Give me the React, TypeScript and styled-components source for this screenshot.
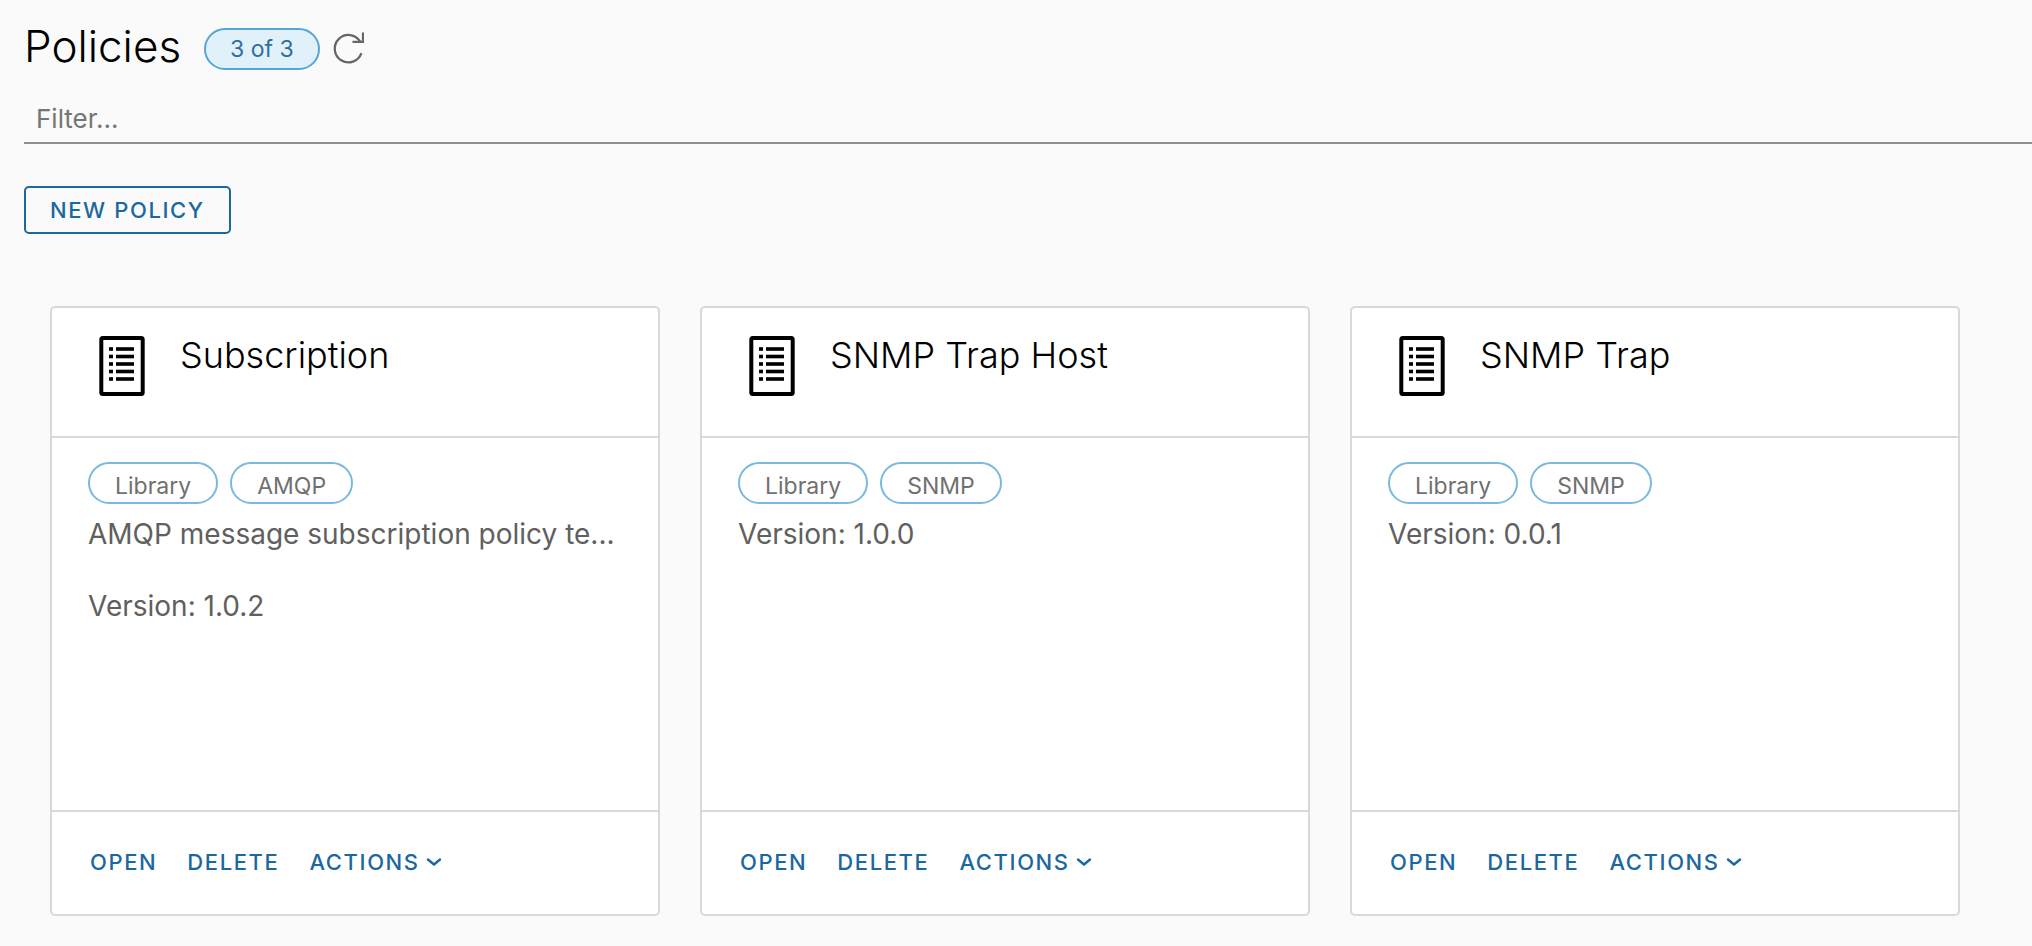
import React, { useState } from "react";
import styled, { createGlobalStyle } from "styled-components";

const GlobalStyle = createGlobalStyle`
  *, *::before, *::after { box-sizing: border-box; }
  body {
    margin: 0;
    background: #fafafa;
    color: #606060;
    font-family: Inter, "Open Sans", sans-serif;
  }
`;

const blue = "#1b689f";
const line = "#d9d9d9";

const Page = styled.main`
  padding: 22px 0 30px 24px;
`;

const TitleRow = styled.header`
  display: flex;
  align-items: flex-end;
`;

const PageTitle = styled.h1`
  margin: 0 23px 0 0;
  font-size: 44px;
  font-weight: 300;
  line-height: 48px;
  color: #000;
`;

const CountBadge = styled.span`
  height: 42px;
  padding: 0 24px;
  border: 2px solid #55a5d6;
  border-radius: 21px;
  background: #e1f1fa;
  color: #2f6f9f;
  font-size: 23px;
  line-height: 38px;
`;

const RefreshButton = styled.button`
  display: flex;
  margin: 0 0 0 12px;
  padding: 0;
  border: 0;
  background: none;
  color: #666;
  cursor: pointer;
`;

const FilterInput = styled.input`
  display: block;
  width: 100%;
  height: 50px;
  margin: 24px 0 0;
  padding: 0 12px;
  border: 0;
  border-bottom: 2px solid #8f8f8f;
  border-radius: 0;
  background: none;
  color: #000;
  font: inherit;
  font-size: 26px;
  outline: none;
  &::placeholder { color: #757575; opacity: 1; }
`;

const NewPolicyButton = styled.button`
  height: 48px;
  margin: 42px 0 0;
  padding: 0 24px;
  border: 2px solid ${blue};
  border-radius: 5px;
  background: transparent;
  color: ${blue};
  font: inherit;
  font-size: 22px;
  font-weight: 500;
  letter-spacing: 0.073em;
  text-transform: uppercase;
  cursor: pointer;
`;

const CardGrid = styled.section`
  display: grid;
  grid-template-columns: repeat(3, minmax(0, 1fr));
  gap: 40px;
  margin-top: 72px;
  padding: 0 72px 0 26px;
`;

const Card = styled.article`
  display: flex;
  flex-direction: column;
  min-height: 610px;
  border: 2px solid ${line};
  border-radius: 5px;
  background: #fff;
`;

const CardHeader = styled.div`
  display: flex;
  align-items: flex-start;
  gap: 24px;
  padding: 24px 36px 38px;
  border-bottom: 2px solid ${line};
  color: #000;
`;

const CardTitle = styled.h2`
  margin: 0;
  font-size: 36px;
  font-weight: 300;
  line-height: 46px;
`;

const CardBody = styled.div`
  flex: 1;
  padding: 24px 36px;
`;

const Tags = styled.div`
  display: flex;
  gap: 12px;
  margin-bottom: 6px;
`;

const Tag = styled.span`
  height: 42px;
  padding: 0 25px;
  border: 2px solid #79b9de;
  border-radius: 21px;
  font-size: 23px;
  line-height: 44px;
  color: #707070;
`;

const Line = styled.p`
  margin: 0 0 24px;
  font-size: 28px;
  line-height: 48px;
  white-space: nowrap;
`;

const CardFooter = styled.div`
  display: flex;
  align-items: center;
  gap: 30px;
  height: 104px;
  padding: 0 38px 2px;
  border-top: 2px solid ${line};
`;

const CardAction = styled.button`
  display: flex;
  align-items: center;
  gap: 6px;
  padding: 0;
  border: 0;
  background: none;
  color: ${blue};
  font: inherit;
  font-size: 22px;
  font-weight: 500;
  letter-spacing: 0.073em;
  text-transform: uppercase;
  cursor: pointer;
`;

const RefreshIcon = () => (
  <svg width="32" height="42" viewBox="0 0 32 42" fill="none" stroke="currentColor" strokeWidth="2.2" aria-hidden="true">
    <path d="M29.4 25.2A13.7 13.7 0 1 1 28.2 13.6" />
    <path d="M31 4.5v9.3H20.5" />
  </svg>
);

const CaretIcon = () => (
  <svg width="16" height="16" viewBox="0 0 16 16" fill="none" stroke="currentColor" strokeWidth="2.4" strokeLinecap="round" strokeLinejoin="round" aria-hidden="true">
    <path d="M2 5.5l6 5 6-5" />
  </svg>
);

const PolicyIcon = () => (
  <svg width="68" height="66" viewBox="0 0 68 66" fill="currentColor" aria-hidden="true">
    <rect x="13.3" y="6" width="41.4" height="56" rx="1.5" fill="none" stroke="currentColor" strokeWidth="4" />
    {[0, 1, 2, 3, 4].map((i) => (
      <React.Fragment key={i}>
        <rect x="21" y={15.2 + 7.5 * i} width="4" height="3.6" />
        <rect x="28" y={15.2 + 7.5 * i} width="18" height="3.6" />
      </React.Fragment>
    ))}
  </svg>
);

type Policy = { name: string; tags: string[]; description?: string; version: string };

const policies: Policy[] = [
  { name: "Subscription", tags: ["Library", "AMQP"], description: "AMQP message subscription policy te...", version: "1.0.2" },
  { name: "SNMP Trap Host", tags: ["Library", "SNMP"], version: "1.0.0" },
  { name: "SNMP Trap", tags: ["Library", "SNMP"], version: "0.0.1" },
];

function PolicyCard({ policy }: { policy: Policy }) {
  return (
    <Card>
      <CardHeader>
        <PolicyIcon />
        <CardTitle>{policy.name}</CardTitle>
      </CardHeader>
      <CardBody>
        <Tags>{policy.tags.map((t) => <Tag key={t}>{t}</Tag>)}</Tags>
        {policy.description && <Line>{policy.description}</Line>}
        <Line>{`Version: ${policy.version}`}</Line>
      </CardBody>
      <CardFooter>
        <CardAction type="button">Open</CardAction>
        <CardAction type="button">Delete</CardAction>
        <CardAction type="button" aria-haspopup="menu">Actions<CaretIcon /></CardAction>
      </CardFooter>
    </Card>
  );
}

export default function App() {
  const [filter, setFilter] = useState("");
  const shown = policies.filter((p) => p.name.toLowerCase().includes(filter.toLowerCase()));
  return (
    <Page>
      <GlobalStyle />
      <TitleRow>
        <PageTitle>Policies</PageTitle>
        <CountBadge>{`${shown.length} of ${policies.length}`}</CountBadge>
        <RefreshButton type="button" aria-label="Refresh"><RefreshIcon /></RefreshButton>
      </TitleRow>
      <FilterInput aria-label="Filter policies" placeholder="Filter..." value={filter} onChange={(e) => setFilter(e.target.value)} />
      <NewPolicyButton type="button">New Policy</NewPolicyButton>
      <CardGrid>
        {shown.map((p) => <PolicyCard key={p.name} policy={p} />)}
      </CardGrid>
    </Page>
  );
}
